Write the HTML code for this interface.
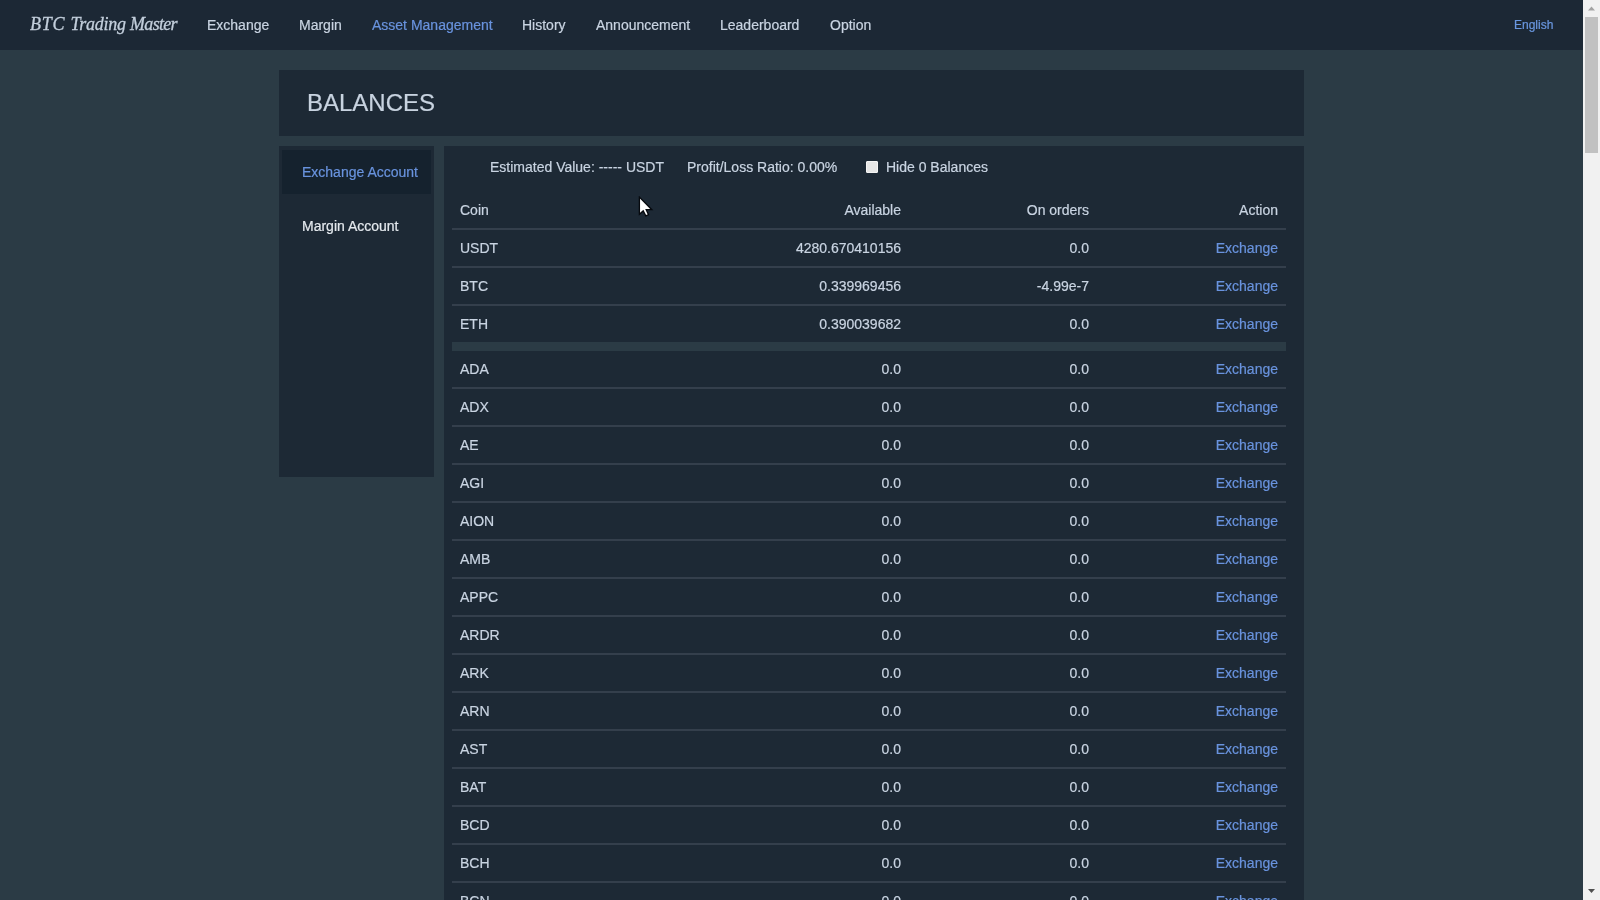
<!DOCTYPE html>
<html lang="en"><head><meta charset="utf-8"><title>BTC Trading Master</title>
<style>
*{box-sizing:border-box;margin:0;padding:0}
html,body{width:1600px;height:900px;overflow:hidden}
body{background:#2b3b45;font-family:"Liberation Sans",Arial,sans-serif;font-size:14px;color:#c9d4e2;position:relative;-webkit-text-stroke:0.2px}
#nav,#title,#side,#main{will-change:transform}
#nav{position:absolute;left:0;top:0;width:1583px;height:50px;background:#1c2835}
#logo{position:absolute;left:30px;top:0;height:50px;line-height:49px;font-family:"Liberation Serif","Times New Roman",serif;font-style:italic;font-size:18px;color:#c3cfdc;white-space:nowrap;-webkit-text-stroke:0.3px #c3cfdc}
#nav a{position:absolute;top:0;height:50px;line-height:51px;color:#c9d4e2;white-space:nowrap}
#nav a.act{color:#6993de}
#nav a.lang{font-size:12px;color:#6a97e0;line-height:50px}
#title{position:absolute;left:279px;top:70px;width:1025px;height:66px;background:#1d2935;font-size:24px;line-height:66px;padding-left:28px;color:#c8d3e0}
#side{position:absolute;left:279px;top:146px;width:155px;height:331px;background:#1d2935;padding:4px 3px}
#side div{height:44px;line-height:44px;padding-left:20px;white-space:nowrap;color:#e4e9ee}
#side div.act{background:#15222e;color:#6993de}
#side div.m{margin-top:10px}
#main{position:absolute;left:444px;top:146px;width:860px;height:754px;background:#1d2935;overflow:hidden}
#sum{position:absolute;left:0;top:0;height:44px;line-height:43px;white-space:nowrap;color:#c9d4e2}
#sum span{position:absolute;top:0}
#cb{position:absolute;left:422px;top:15px;width:12px;height:12px;background:#e6e6e6;border:1px solid #f4f4f4;border-radius:1px}
table{position:absolute;left:8px;top:46px;width:834px;border-collapse:separate;border-spacing:0;table-layout:fixed}
td,th{height:38px;border-bottom:2px solid #343f4c;font-weight:normal;font-size:14px;padding:0 8px;white-space:nowrap;color:#c9d4e2;vertical-align:middle}
th{height:38px}
.c{text-align:left;width:269px}
.r{text-align:right}
.a{width:188px}.o{width:188px}.x{width:189px}
td a{color:#6993de}
tr.last td{border-bottom:9px solid #2b3b45;height:45px}
#sb{position:absolute;left:1583px;top:0;width:17px;height:900px;background:#f1f1f1}
#sb .th{position:absolute;left:2px;top:17px;width:13px;height:136px;background:#c1c1c1}
#sb svg{position:absolute;left:0}
#cur{position:absolute;left:638px;top:196px}
</style></head><body>
<div id="nav">
<div id="logo"><span style="letter-spacing:0.75px">BTC </span><span style="letter-spacing:-0.25px">Trading </span><span style="letter-spacing:-0.7px">Master</span></div>
<a style="left:207px">Exchange</a>
<a style="left:299px">Margin</a>
<a class="act" style="left:372px">Asset Management</a>
<a style="left:522px">History</a>
<a style="left:596px">Announcement</a>
<a style="left:720px">Leaderboard</a>
<a style="left:830px">Option</a>
<a class="lang" style="left:1514px">English</a>
</div>
<div id="title">BALANCES</div>
<div id="side"><div class="act">Exchange Account</div><div class="m">Margin Account</div></div>
<div id="main">
<div id="sum"><span style="left:46px">Estimated Value: ----- USDT</span><span style="left:243px">Profit/Loss Ratio: 0.00%</span><i id="cb"></i><span style="left:442px">Hide 0 Balances</span></div>
<table>
<thead><tr><th class="c">Coin</th><th class="r a">Available</th><th class="r o">On orders</th><th class="r x">Action</th></tr></thead>
<tbody>
<tr><td class="c">USDT</td><td class="r a">4280.670410156</td><td class="r o">0.0</td><td class="r x"><a>Exchange</a></td></tr>
<tr><td class="c">BTC</td><td class="r a">0.339969456</td><td class="r o">-4.99e-7</td><td class="r x"><a>Exchange</a></td></tr>
<tr class="last"><td class="c">ETH</td><td class="r a">0.390039682</td><td class="r o">0.0</td><td class="r x"><a>Exchange</a></td></tr>
<tr><td class="c">ADA</td><td class="r a">0.0</td><td class="r o">0.0</td><td class="r x"><a>Exchange</a></td></tr>
<tr><td class="c">ADX</td><td class="r a">0.0</td><td class="r o">0.0</td><td class="r x"><a>Exchange</a></td></tr>
<tr><td class="c">AE</td><td class="r a">0.0</td><td class="r o">0.0</td><td class="r x"><a>Exchange</a></td></tr>
<tr><td class="c">AGI</td><td class="r a">0.0</td><td class="r o">0.0</td><td class="r x"><a>Exchange</a></td></tr>
<tr><td class="c">AION</td><td class="r a">0.0</td><td class="r o">0.0</td><td class="r x"><a>Exchange</a></td></tr>
<tr><td class="c">AMB</td><td class="r a">0.0</td><td class="r o">0.0</td><td class="r x"><a>Exchange</a></td></tr>
<tr><td class="c">APPC</td><td class="r a">0.0</td><td class="r o">0.0</td><td class="r x"><a>Exchange</a></td></tr>
<tr><td class="c">ARDR</td><td class="r a">0.0</td><td class="r o">0.0</td><td class="r x"><a>Exchange</a></td></tr>
<tr><td class="c">ARK</td><td class="r a">0.0</td><td class="r o">0.0</td><td class="r x"><a>Exchange</a></td></tr>
<tr><td class="c">ARN</td><td class="r a">0.0</td><td class="r o">0.0</td><td class="r x"><a>Exchange</a></td></tr>
<tr><td class="c">AST</td><td class="r a">0.0</td><td class="r o">0.0</td><td class="r x"><a>Exchange</a></td></tr>
<tr><td class="c">BAT</td><td class="r a">0.0</td><td class="r o">0.0</td><td class="r x"><a>Exchange</a></td></tr>
<tr><td class="c">BCD</td><td class="r a">0.0</td><td class="r o">0.0</td><td class="r x"><a>Exchange</a></td></tr>
<tr><td class="c">BCH</td><td class="r a">0.0</td><td class="r o">0.0</td><td class="r x"><a>Exchange</a></td></tr>
<tr><td class="c">BCN</td><td class="r a">0.0</td><td class="r o">0.0</td><td class="r x"><a>Exchange</a></td></tr>
</tbody></table>
</div>
<div id="sb"><svg width="17" height="17" style="top:0"><path d="M5 10.5 L8.5 6.5 L12 10.5 Z" fill="#a3a3a3"/></svg><div class="th"></div><svg width="17" height="17" style="top:883px"><path d="M5 6 L12 6 L8.5 10 Z" fill="#505050"/></svg></div>
<svg id="cur" width="18" height="24" viewBox="0 0 18 24"><path d="M1.4 1.1 L1.4 18.2 L5.2 14.9 L7.8 19.9 L10.5 18.7 L8.2 13.7 L13.8 13.7 Z" fill="#fff" stroke="#06090e" stroke-width="1.3" stroke-linejoin="miter"/></svg>
</body></html>
